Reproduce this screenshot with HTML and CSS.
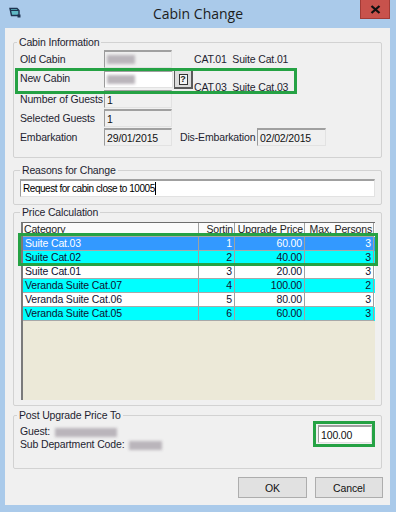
FILE: index.html
```html
<!DOCTYPE html>
<html>
<head>
<meta charset="utf-8">
<link rel="stylesheet" href="styles.css">
</head>
<body>
<div class="window">
  <div class="titlebar">
    <svg class="appicon" width="12" height="11" viewBox="0 0 12 11">
      <path d="M1 1.5 H8 L10 3.5 V8.5 H2.5 Z" fill="#5fb8c4" stroke="#1d3350" stroke-width="1.4"/>
      <path d="M2 3.5 H9.5" stroke="#1d3350" stroke-width="1"/>
      <rect x="8.5" y="7.5" width="3" height="3" fill="#1d3350"/>
    </svg>
    <div class="title">Cabin Change</div>
    <div class="close">
      <svg width="11" height="9" viewBox="0 0 11 9"><path d="M1.5 1 L9.5 8 M9.5 1 L1.5 8" stroke="#111" stroke-width="2.3"/></svg>
    </div>
  </div>
  <div class="client">
    <fieldset class="group g-cabin">
      <legend>Cabin Information</legend>
      <div class="row">
        <span class="lbl">Old Cabin</span>
        <span class="field w68"><span class="blur b-old"></span></span>
        <span class="cat">CAT.01&nbsp; Suite Cat.01</span>
      </div>
      <div class="row">
        <span class="lbl lbl-up">New Cabin</span>
        <span class="field white w69"><span class="blur b-old"></span></span>
        <span class="qbtn"><span class="qmark">?</span></span>
        <span class="cat cat-low">CAT.03&nbsp; Suite Cat.03</span>
      </div>
      <div class="row">
        <span class="lbl">Number of Guests</span>
        <span class="field w68">1</span>
      </div>
      <div class="row short">
        <span class="lbl">Selected Guests</span>
        <span class="field w68">1</span>
      </div>
      <div class="row">
        <span class="lbl">Embarkation</span>
        <span class="field w68">29/01/2015</span>
        <span class="lbl2">Dis-Embarkation</span>
        <span class="field w69">02/02/2015</span>
      </div>
    </fieldset>

    <fieldset class="group g-reason">
      <legend class="lg-in">Reasons for Change</legend>
      <div class="field white wide"><span class="reason-text">Request for cabin close to 10005</span><span class="caret"></span></div>
    </fieldset>

    <fieldset class="group g-price">
      <legend class="lg-in">Price Calculation</legend>
      <div class="grid">
        <div class="tr th">
          <span class="c">Category</span><span class="c r">Sortin</span><span class="c r">Upgrade Price</span><span class="c r">Max. Persons</span>
        </div>
        <div class="tr sel">
          <span class="c">Suite Cat.03</span><span class="c r">1</span><span class="c r">60.00</span><span class="c r">3</span>
        </div>
        <div class="tr cyan">
          <span class="c">Suite Cat.02</span><span class="c r">2</span><span class="c r">40.00</span><span class="c r">3</span>
        </div>
        <div class="tr plain">
          <span class="c">Suite Cat.01</span><span class="c r">3</span><span class="c r">20.00</span><span class="c r">3</span>
        </div>
        <div class="tr cyan">
          <span class="c">Veranda Suite Cat.07</span><span class="c r">4</span><span class="c r">100.00</span><span class="c r">2</span>
        </div>
        <div class="tr plain">
          <span class="c">Veranda Suite Cat.06</span><span class="c r">5</span><span class="c r">80.00</span><span class="c r">3</span>
        </div>
        <div class="tr cyan">
          <span class="c">Veranda Suite Cat.05</span><span class="c r">6</span><span class="c r">60.00</span><span class="c r">3</span>
        </div>
      </div>
    </fieldset>

    <fieldset class="group g-post">
      <legend>Post Upgrade Price To</legend>
      <div class="post">
        <div class="post-info">
          <div class="line">Guest: <span class="blur b-guest"></span></div>
          <div class="line">Sub Department Code: <span class="blur b-sub"></span></div>
        </div>
        <span class="field white amount">100.00</span>
      </div>
    </fieldset>

    <div class="footer">
      <span class="btn ok">OK</span>
      <span class="btn cancel">Cancel</span>
    </div>

    <div class="hl hl-cabin"></div>
    <div class="hl hl-rows"></div>
    <div class="hl hl-amount"></div>
  </div>
</div>
</body>
</html>
```

FILE: styles.css
```css
html, body {
  margin: 0;
  padding: 0;
}
body {
  background: #aacaea;
  font-family: "Liberation Sans", Arial, sans-serif;
  font-size: 10.5px;
  letter-spacing: -0.15px;
  color: #1e1e30;
}
.window {
  width: 396px;
  height: 512px;
  background: #aacaea;
  display: flex;
  flex-direction: column;
}
.titlebar {
  height: 28px;
  display: grid;
  grid-template-columns: 1fr auto 1fr;
  align-items: start;
}
.appicon {
  margin: 7px 0 0 9px;
}
.title {
  font-family: "Open Sans", "Liberation Sans", sans-serif;
  font-size: 14px;
  letter-spacing: 0;
  line-height: 28px;
  color: #1c1c1c;
}
.close {
  justify-self: end;
  box-sizing: border-box;
  width: 30px;
  height: 19px;
  margin-right: 6px;
  background: #c8524c;
  border: 1px solid #a23b36;
  border-top: 0;
  display: flex;
  align-items: center;
  justify-content: center;
}
.client {
  position: relative;
  margin-left: 5px;
  width: 385px;
  height: 477px;
  background: #f0f0f0;
  display: flex;
  flex-direction: column;
}
.group {
  box-sizing: border-box;
  margin: 0 0 0 8px;
  width: 369px;
  border: 1px solid #d2d2d2;
  border-radius: 2px;
  padding: 0 6px;
  min-width: 0;
}
.group legend {
  padding: 0 2px;
  margin-left: -3px;
  line-height: 13px;
  height: 13px;
}
.group legend.lg-in {
  margin-left: 0;
}
.g-cabin { margin-top: 8px; height: 122px; }
.g-reason { margin-top: 6px; height: 41px; }
.g-price { margin-top: 1px; height: 200px; }
.g-post { margin-top: 3px; height: 60px; }

.row {
  display: flex;
  align-items: center;
  height: 20px;
}
.row.short { height: 18px; }
.lbl {
  width: 84px;
  flex: none;
  white-space: nowrap;
}
.lbl-up { margin-top: -3px; }
.lbl2 {
  margin-left: 8px;
  width: 77px;
  flex: none;
  white-space: nowrap;
}
.field {
  box-sizing: border-box;
  flex: none;
  height: 18px;
  border-style: solid;
  border-width: 2px 1px 1px 1px;
  border-color: #a0a0a0 #e2e2e2 #e2e2e2 #9a9a9a;
  background: #f0f0f0;
  padding-left: 2px;
  display: flex;
  align-items: center;
  white-space: nowrap;
  color: #111;
}
.field.white { background: #fff; }
.w68 { width: 68px; }
.w69 { width: 69px; }
.wide { width: 355px; margin-top: 2px; }
.reason-text {
  font-size: 10px;
  letter-spacing: -0.45px;
  color: #000;
}
.caret {
  display: inline-block;
  width: 1px;
  height: 13px;
  background: #000;
}
.cat {
  margin-left: 22px;
  white-space: nowrap;
}
.cat-low {
  margin-left: 1px;
  align-self: flex-end;
  margin-bottom: -4px;
}
.qbtn {
  box-sizing: border-box;
  flex: none;
  margin-left: 1px;
  width: 19px;
  height: 19px;
  margin-top: 1px;
  background: #dcdcdc;
  border: 1px solid #5a5a5a;
  border-right-width: 2px;
  border-bottom-width: 2px;
  display: flex;
  align-items: center;
  justify-content: center;
}
.qmark {
  box-sizing: border-box;
  width: 9px;
  height: 11px;
  border: 1px solid #333;
  font-size: 9px;
  line-height: 9px;
  text-align: center;
  font-weight: bold;
  color: #222;
  background: #f4f4f4;
}
.blur {
  display: inline-block;
  background: #bab5bb;
  filter: blur(1.4px);
  height: 9px;
}
.b-old { width: 28px; }
.b-guest { width: 62px; vertical-align: middle; margin-left: 2px; }
.b-sub { width: 33px; vertical-align: middle; margin-left: 2px; }

.grid {
  box-sizing: border-box;
  margin-top: 3px;
  margin-left: 1px;
  width: 354px;
  height: 178px;
  background: #ece9d8;
  border-top: 1px solid #6e6e6e;
  border-left: 2px solid #7a7a7a;
}
.tr {
  display: grid;
  grid-template-columns: 176px 36px 70px 69px;
  height: 14px;
}
.c {
  box-sizing: border-box;
  border-right: 1px solid #a0a0a0;
  border-bottom: 1px solid #a8a8a8;
  padding: 0 2px 0 2px;
  line-height: 13px;
  white-space: nowrap;
  overflow: hidden;
}
.c.r { text-align: right; }
.th { background: #fbfbfb; color: #222; }
.th .c { padding: 0 1px; }
.sel { background: #3399ff; color: #fff; }
.cyan { background: #00ffff; color: #101030; }
.plain { background: #fff; color: #101030; }

.post {
  display: flex;
  align-items: flex-start;
  padding-top: 3px;
}
.post-info .line {
  line-height: 13px;
  white-space: nowrap;
}
.amount {
  margin-left: auto;
  margin-right: 3px;
  width: 54px;
}

.footer {
  display: flex;
  justify-content: flex-end;
  gap: 8px;
  margin-top: 8px;
  padding-right: 7px;
}
.btn {
  box-sizing: border-box;
  height: 21px;
  background: #e1e1e1;
  border: 1px solid #adadad;
  display: flex;
  align-items: center;
  justify-content: center;
  color: #111;
}
.ok { width: 69px; }
.cancel { width: 68px; }

.hl {
  position: absolute;
  box-sizing: border-box;
  border: 3px solid #25a244;
  pointer-events: none;
}
.hl-cabin { left: 10px; top: 40px; width: 282px; height: 26px; }
.hl-rows { left: 13px; top: 205px; width: 360px; height: 33px; }
.hl-amount { left: 308px; top: 393px; width: 62px; height: 26px; }
```
